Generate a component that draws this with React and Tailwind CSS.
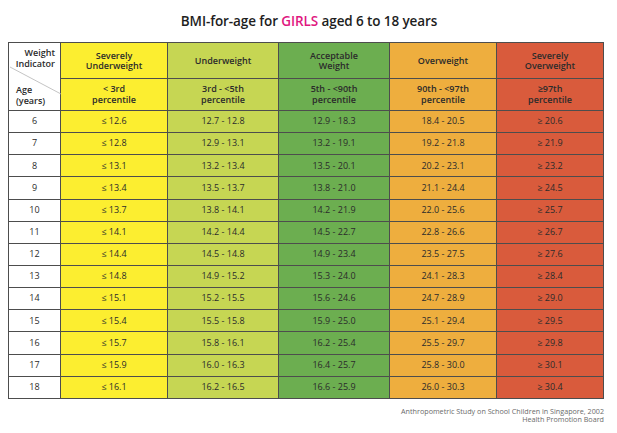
import React from "react";

const rows = [
  ["6", "≤ 12.6", "12.7 - 12.8", "12.9 - 18.3", "18.4 - 20.5", "≥ 20.6"],
  ["7", "≤ 12.8", "12.9 - 13.1", "13.2 - 19.1", "19.2 - 21.8", "≥ 21.9"],
  ["8", "≤ 13.1", "13.2 - 13.4", "13.5 - 20.1", "20.2 - 23.1", "≥ 23.2"],
  ["9", "≤ 13.4", "13.5 - 13.7", "13.8 - 21.0", "21.1 - 24.4", "≥ 24.5"],
  ["10", "≤ 13.7", "13.8 - 14.1", "14.2 - 21.9", "22.0 - 25.6", "≥ 25.7"],
  ["11", "≤ 14.1", "14.2 - 14.4", "14.5 - 22.7", "22.8 - 26.6", "≥ 26.7"],
  ["12", "≤ 14.4", "14.5 - 14.8", "14.9 - 23.4", "23.5 - 27.5", "≥ 27.6"],
  ["13", "≤ 14.8", "14.9 - 15.2", "15.3 - 24.0", "24.1 - 28.3", "≥ 28.4"],
  ["14", "≤ 15.1", "15.2 - 15.5", "15.6 - 24.6", "24.7 - 28.9", "≥ 29.0"],
  ["15", "≤ 15.4", "15.5 - 15.8", "15.9 - 25.0", "25.1 - 29.4", "≥ 29.5"],
  ["16", "≤ 15.7", "15.8 - 16.1", "16.2 - 25.4", "25.5 - 29.7", "≥ 29.8"],
  ["17", "≤ 15.9", "16.0 - 16.3", "16.4 - 25.7", "25.8 - 30.0", "≥ 30.1"],
  ["18", "≤ 16.1", "16.2 - 16.5", "16.6 - 25.9", "26.0 - 30.3", "≥ 30.4"],
];

const bgs = ["bg-white", "bg-[#fcee30]", "bg-[#c6d653]", "bg-[#6cae50]", "bg-[#eeae3e]", "bg-[#d95b3c]"];

const head1 = [
  ["Severely", "Underweight"],
  ["Underweight"],
  ["Acceptable", "Weight"],
  ["Overweight"],
  ["Severely", "Overweight"],
];
const head2 = [
  ["< 3rd", "percentile"],
  ["3rd - <5th", "percentile"],
  ["5th - <90th", "percentile"],
  ["90th - <97th", "percentile"],
  ["≥97th", "percentile"],
];

const cellB = "border-r border-b border-[#4d4d4d]";

export default function App() {
  return (
    <div
      className="w-[617px] h-[433px] bg-white text-[#2b2b2b] relative"
      style={{ fontFamily: '"Open Sans", "Liberation Sans", sans-serif' }}
    >
      <div className="h-[42px] flex items-center justify-center pt-[1px]">
        <h1 className="text-[13.5px] font-semibold tracking-[-0.1px] leading-none text-[#1e1e1e] pl-[1px]">
          BMI-for-age for <span className="text-[#e0177f]">GIRLS</span> aged 6 to 18 years
        </h1>
      </div>
      <div className="ml-[8px] w-[596px] border-l border-t border-[#4d4d4d] grid grid-cols-[52px_107px_111px_111px_107px_107px] grid-rows-[36px_32px_repeat(13,22.15px)] text-[9px] leading-[10.5px]">
        <div className={`row-span-2 relative bg-white ${cellB} font-semibold`}>
          <svg className="absolute left-0 top-0" width="52" height="68">
            <line x1="1" y1="24" x2="52" y2="51" stroke="#b5b5b5" strokeWidth="0.8" />
          </svg>
          <div className="absolute right-[5px] top-[5px] text-right">
            Weight<br />Indicator
          </div>
          <div className="absolute left-[7px] bottom-[4px] text-left">
            Age<br />(years)
          </div>
        </div>
        {head1.map((h, i) => (
          <div key={"h1" + i} className={`${bgs[i + 1]} ${cellB} flex flex-col items-center justify-center font-semibold text-center pt-[1px]`}>
            {h.map((t, j) => (
              <span key={j}>{t}</span>
            ))}
          </div>
        ))}
        {head2.map((h, i) => (
          <div key={"h2" + i} className={`${bgs[i + 1]} ${cellB} flex flex-col items-center justify-center font-semibold text-center`}>
            {h.map((t, j) => (
              <span key={j}>{t}</span>
            ))}
          </div>
        ))}
        {rows.map((r, ri) =>
          r.map((c, ci) => (
            <div key={ri + "-" + ci} className={`${bgs[ci]} ${cellB} flex items-center justify-center font-medium`}>
              {c}
            </div>
          ))
        )}
      </div>
      <div className="w-[604px] mt-[8px] text-right text-[7.2px] leading-[8px] text-[#6a6a6a]">
        <div>Anthropometric Study on School Children in Singapore, 2002</div>
        <div>Health Promotion Board</div>
      </div>
    </div>
  );
}
